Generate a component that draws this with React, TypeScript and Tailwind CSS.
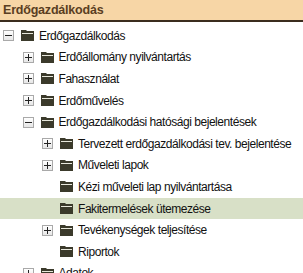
import React from "react";

type Node = {
  label: string;
  level: number;
  toggle?: "plus" | "minus";
  active?: boolean;
};

const nodes: Node[] = [
  { label: "Erdőgazdálkodás", level: 0, toggle: "minus" },
  { label: "Erdőállomány nyilvántartás", level: 1, toggle: "plus" },
  { label: "Fahasználat", level: 1, toggle: "plus" },
  { label: "Erdőművelés", level: 1, toggle: "plus" },
  { label: "Erdőgazdálkodási hatósági bejelentések", level: 1, toggle: "minus" },
  { label: "Tervezett erdőgazdálkodási tev. bejelentése", level: 2, toggle: "plus" },
  { label: "Műveleti lapok", level: 2, toggle: "plus" },
  { label: "Kézi műveleti lap nyilvántartása", level: 2 },
  { label: "Fakitermelések ütemezése", level: 2, active: true },
  { label: "Tevékenységek teljesítése", level: 2, toggle: "plus" },
  { label: "Riportok", level: 2 },
  { label: "Adatok", level: 1, toggle: "plus" },
];

function Toggle({ kind }: { kind?: "plus" | "minus" }) {
  if (!kind) return <span className="w-[11px] h-[11px] shrink-0" />;
  return (
    <span className="w-[11px] h-[11px] shrink-0 border border-[#a9a9a9] bg-gradient-to-b from-white to-[#e6e6e6] flex items-center justify-center">
      <svg width="7" height="7" viewBox="0 0 7 7">
        <rect x="0" y="3" width="7" height="1" fill="#222" />
        {kind === "plus" && <rect x="3" y="0" width="1" height="7" fill="#222" />}
      </svg>
    </span>
  );
}

function Folder() {
  return (
    <svg width="13" height="11" viewBox="0 0 13 11" className="shrink-0">
      <path d="M0 0 H5 L6 1 H13 V11 H0 Z" fill="#3b3a2b" />
      <rect x="1" y="3" width="11" height="1" fill="#e8e8dc" />
    </svg>
  );
}

export default function App() {
  return (
    <div className="w-[303px] h-[273px] overflow-hidden bg-white font-['Liberation_Sans',Arial,sans-serif]">
      <div className="h-[22px] bg-[#f7d6a6] border-b-2 border-[#3b2d1e] flex items-center px-[3px]">
        <span className="text-[12.5px] font-bold text-[#5a3e22] tracking-[-0.2px]">Erdőgazdálkodás</span>
      </div>
      <div className="pt-[3px]">
        {nodes.map((n, i) => (
          <div
            key={i}
            className={`h-[21.6px] flex items-center whitespace-nowrap ${n.active ? "bg-[#d8e0c7]" : ""}`}
            style={{ paddingLeft: 3 + n.level * 19.5 }}
          >
            <Toggle kind={n.toggle} />
            <span className="ml-[7px]">
              <Folder />
            </span>
            <span className="ml-[5px] text-[12px] text-[#111] tracking-[-0.45px]">{n.label}</span>
          </div>
        ))}
      </div>
    </div>
  );
}
